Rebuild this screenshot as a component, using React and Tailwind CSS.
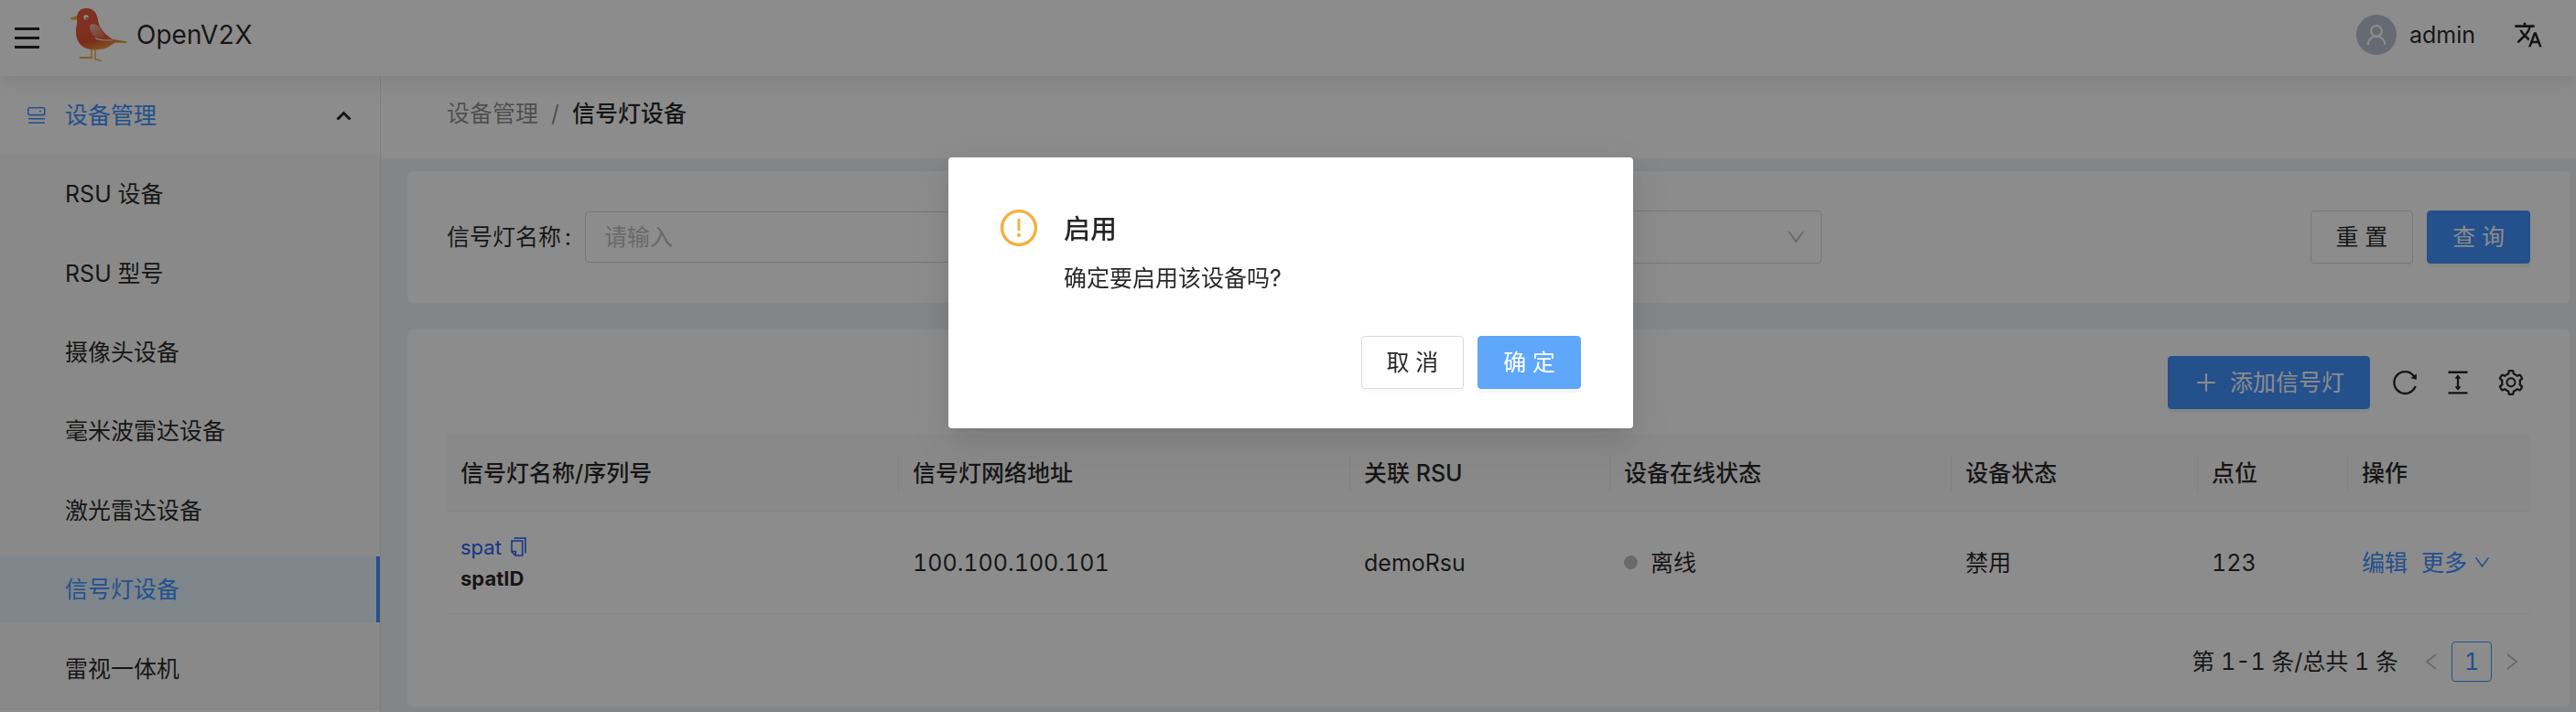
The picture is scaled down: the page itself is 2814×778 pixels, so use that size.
import React from "react";
import {
  AiOutlineColumnHeight,
  AiOutlineDown,
  AiOutlineExclamationCircle,
  AiOutlineLeft,
  AiOutlinePlus,
  AiOutlineReload,
  AiOutlineRight,
  AiOutlineSetting,
  AiOutlineUser,
} from "react-icons/ai";
import { MdTranslate } from "react-icons/md";

const menuItems = [
  "RSU 设备",
  "RSU 型号",
  "摄像头设备",
  "毫米波雷达设备",
  "激光雷达设备",
  "信号灯设备",
  "雷视一体机",
];

function Bird() {
  return (
    <svg viewBox="0 0 64 60" className="h-[60px] w-16" aria-hidden="true">
      <defs>
        <linearGradient id="body" x1="0.3" y1="0" x2="0.6" y2="1">
          <stop offset="0.3" stopColor="#e8583f" />
          <stop offset="0.75" stopColor="#e0532f" />
          <stop offset="1" stopColor="#e89a3c" />
        </linearGradient>
        <linearGradient id="wing" x1="0.2" y1="0" x2="0.8" y2="0.9">
          <stop offset="0" stopColor="#efb3a2" />
          <stop offset="0.6" stopColor="#e8866a" />
          <stop offset="1" stopColor="#e0603c" />
        </linearGradient>
        <linearGradient id="tail" x1="0" y1="0" x2="1" y2="0">
          <stop offset="0" stopColor="#e0662f" />
          <stop offset="1" stopColor="#e8ac3c" />
        </linearGradient>
      </defs>
      <path d="M24 44v11M28 44v12.500" stroke="#e8b048" strokeWidth="1.500" fill="none" />
      <path d="M24.500 55H11.500M28 56.500L34 58.500" stroke="#e8b048" strokeWidth="1.800" fill="none" strokeLinecap="round" />
      <path d="M9 9L0.500 11.500L2 13.500L10 14Z" fill="#efb23c" />
      <path d="M38 35L50 35.300L63 37.500L62 39L50 38.500L36 46Z" fill="url(#tail)" />
      <path
        d="M8 12C8 4 13 1 18.500 1C27 1 30 7 31 14C32 21 35 24 40 30L50 37C46 42 38 46.500 27 46.500C14 46.500 7 38 7 27C7 20 9 17 8 12Z"
        fill="url(#body)"
      />
      <path d="M24 18.500C29 17.500 33 21 35 25C37 29 40 33 42.500 35.300C34 35.500 28 34 25 29.500C22 25 20.500 19.500 24 18.500Z" fill="url(#wing)" />
      <path d="M28 33.500C32 36.500 38 36 47 36" stroke="#fbe4dc" strokeWidth="1.200" fill="none" />
      <circle cx="18" cy="10.800" r="2.600" fill="#fff" />
      <circle cx="18.800" cy="12" r="1.100" fill="#6a4a30" />
    </svg>
  );
}

function DeviceIcon() {
  return (
    <svg viewBox="0 0 20 19" className="h-[19px] w-5" fill="none" stroke="currentColor" strokeWidth="1.600" aria-hidden="true">
      <rect x="0.800" y="0.800" width="18" height="7.800" rx="1.800" />
      <path d="M13 4.700h2M1 12.800h18M1 17.200h18" />
    </svg>
  );
}

function CopyIcon() {
  return (
    <svg viewBox="0 0 17 21" className="h-[21px] w-[17px]" fill="none" stroke="currentColor" strokeWidth="1.600" aria-hidden="true">
      <path d="M3.500 1H16V17.500" />
      <path d="M1 4H12.700V20H5L1 16Z" />
      <path d="M1.500 15.500H5.300V19.500" />
    </svg>
  );
}

const buttonBase =
  "flex h-[58px] cursor-pointer items-center justify-center rounded border px-[27px] whitespace-nowrap";

function Th({ children, last }) {
  return (
    <th className="border-b border-[#f0f0f0] bg-[#fafafa] p-0 text-left font-medium">
      <div className={last ? "flex h-10 items-center pl-[15px]" : "flex h-10 items-center border-r border-[#ebebeb] pl-[15px]"}>
        {children}
      </div>
    </th>
  );
}

function Modal() {
  return (
    <div className="fixed inset-0 flex items-start justify-center bg-black/45 pt-43 pl-1.5">
      <div
        role="dialog"
        aria-modal="true"
        aria-labelledby="modal-title"
        className="w-[748px] rounded bg-white pt-[58px] pr-[57px] pb-[43px] pl-[54px] shadow-[0_5px_11px_-7px_rgba(0,0,0,0.12),0_11px_29px_0_rgba(0,0,0,0.08),0_16px_50px_14px_rgba(0,0,0,0.05)]"
      >
        <div className="flex gap-[26px]">
          <AiOutlineExclamationCircle className="-mt-1 size-[46px] shrink-0 text-[#f5b03e]" />
          <div>
            <h2 id="modal-title" className="text-[29px] leading-[42px] font-medium">启用</h2>
            <p className="mt-3 leading-10">确定要启用该设备吗?</p>
          </div>
        </div>
        <div className="mt-[43px] flex justify-end gap-[15px]">
          <button type="button" className={`${buttonBase} border-[#d9d9d9] bg-white shadow-[0_4px_0_rgba(0,0,0,0.02)]`}>取 消</button>
          <button type="button" className={`${buttonBase} border-[#5fa7fb] bg-[#5fa7fb] text-white shadow-[0_4px_0_rgba(0,0,0,0.04)]`}>确 定</button>
        </div>
      </div>
    </div>
  );
}

export default function App() {
  return (
    <div className="flex min-h-screen flex-col bg-[#f0f2f5] font-['Inter','Noto_Sans_CJK_SC',sans-serif] text-[25px] leading-10 text-black/85 tabular-nums">
      <header className="relative z-10 flex h-[83px] items-center justify-between bg-white pr-9 pl-4 shadow-[0_4px_22px_rgba(0,21,41,0.10)]">
        <div className="flex items-center">
          <button type="button" aria-label="菜单" className="flex w-[27px] cursor-pointer flex-col gap-[7px]">
            <span className="h-[3px] bg-black/85" />
            <span className="h-[3px] bg-black/85" />
            <span className="h-[3px] bg-black/85" />
          </button>
          <a href="#" className="mb-2 ml-[33px] flex items-center gap-[9px] text-[28px]">
            <Bird />
            <span>OpenV2X</span>
          </a>
        </div>
        <div className="mb-2 flex items-center">
          <span className="flex size-11 items-center justify-center rounded-full bg-[#bcc2cf] text-white">
            <AiOutlineUser className="size-7" />
          </span>
          <span className="ml-3.5">admin</span>
          <button type="button" aria-label="语言" className="ml-[42px] cursor-pointer">
            <MdTranslate className="size-8" />
          </button>
        </div>
      </header>

      <div className="flex flex-1">
        <nav className="w-[416px] shrink-0 border-r border-[#e8e8e8] bg-white">
          <button type="button" className="flex h-[86px] w-full cursor-pointer items-center pr-[31px] pl-[30px] text-[#4292ff]">
            <DeviceIcon />
            <span className="ml-[21px]">设备管理</span>
            <svg viewBox="0 0 17 11" className="ml-auto h-[11px] w-[17px] text-black/85" fill="none" stroke="currentColor" strokeWidth="3" aria-hidden="true">
              <path d="M1.500 9.500L8.500 2.500L15.500 9.500" />
            </svg>
          </button>
          <ul className="flex h-[606px] flex-col justify-around border-b border-[#f0f0f0] bg-[#fafafa]">
            {menuItems.map((label) => {
              const active = label === "信号灯设备";
              return (
                <li key={label}>
                  <a
                    href="#"
                    aria-current={active ? "page" : undefined}
                    className={
                      active
                        ? "flex h-[72px] items-center border-r-4 border-[#4292ff] bg-[#e6f4ff] pl-[71px] text-[#4292ff]"
                        : "flex h-[72px] items-center pl-[71px]"
                    }
                  >
                    {label}
                  </a>
                </li>
              );
            })}
          </ul>
        </nav>

        <main className="min-w-0 flex-1">
          <div className="flex h-[90px] items-center gap-3.5 bg-white pb-2 pl-[72px]">
            <a href="#" className="text-black/45">设备管理</a>
            <span className="text-black/45">/</span>
            <span className="font-medium">信号灯设备</span>
          </div>

          <div className="flex flex-col gap-[29px] pt-3.5 pr-[7px] pl-[29px]">
            <section className="flex h-36 items-center rounded-md bg-white px-[43px]">
              <label htmlFor="name" className="flex w-[151px] shrink-0 gap-1">
                信号灯名称<span>:</span>
              </label>
              <input
                id="name"
                placeholder="请输入"
                className="h-14 w-[570px] rounded border border-[#d9d9d9] bg-transparent px-5 placeholder:text-[#bfbfbf]"
              />
              <label htmlFor="state" className="ml-11 flex w-[151px] shrink-0 gap-1">
                设备状态<span>:</span>
              </label>
              <div className="relative w-[586px]">
                <select id="state" className="h-[58px] w-full appearance-none rounded border border-[#d9d9d9] bg-transparent px-5">
                  <option></option>
                </select>
                <AiOutlineDown className="pointer-events-none absolute top-[17px] right-4 size-6 text-[#bfbfbf]" />
              </div>
              <div className="ml-auto flex gap-[15px]">
                <button type="button" className={`${buttonBase} border-[#d9d9d9] bg-white shadow-[0_4px_0_rgba(0,0,0,0.02)]`}>重 置</button>
                <button type="button" className={`${buttonBase} border-[#4292ff] bg-[#4292ff] text-white shadow-[0_4px_0_rgba(0,0,0,0.04)]`}>查 询</button>
              </div>
            </section>

            <section className="h-[412px] rounded-md bg-white px-[43px] pt-[29px]">
              <div className="mb-7 flex items-center justify-end">
                <button type="button" className={`${buttonBase} gap-3 border-[#4292ff] bg-[#4292ff] text-white shadow-[0_4px_0_rgba(0,0,0,0.04)]`}>
                  <AiOutlinePlus className="size-7" />
                  <span>添加信号灯</span>
                </button>
                <div className="ml-[22px] flex gap-[26px] pr-[5px]">
                  <button type="button" aria-label="刷新" className="cursor-pointer"><AiOutlineReload className="size-8" /></button>
                  <button type="button" aria-label="密度" className="cursor-pointer"><AiOutlineColumnHeight className="size-8" /></button>
                  <button type="button" aria-label="列设置" className="cursor-pointer"><AiOutlineSetting className="size-8" /></button>
                </div>
              </div>

              <table className="w-full table-fixed border-separate border-spacing-0">
                <colgroup>
                  <col className="w-[494px]" />
                  <col className="w-[493px]" />
                  <col className="w-[284px]" />
                  <col className="w-[373px]" />
                  <col className="w-[269px]" />
                  <col className="w-[164px]" />
                  <col className="w-[199px]" />
                </colgroup>
                <thead>
                  <tr className="h-[84px]">
                    <Th>信号灯名称/序列号</Th>
                    <Th>信号灯网络地址</Th>
                    <Th>关联 RSU</Th>
                    <Th>设备在线状态</Th>
                    <Th>设备状态</Th>
                    <Th>点位</Th>
                    <Th last>操作</Th>
                  </tr>
                </thead>
                <tbody>
                  <tr className="h-28 [&>td]:border-b [&>td]:border-[#f0f0f0] [&>td]:pl-[15px]">
                    <td className="text-[22px] leading-[34px]">
                      <a href="#" className="flex items-center gap-2.5 text-[#2b62f0]">
                        spat <CopyIcon />
                      </a>
                      <span className="font-bold">spatID</span>
                    </td>
                    <td>100.100.100.101</td>
                    <td>demoRsu</td>
                    <td>
                      <span className="flex items-center gap-3.5">
                        <span className="size-[15px] rounded-full bg-[#bfbfbf]" />
                        离线
                      </span>
                    </td>
                    <td>禁用</td>
                    <td>123</td>
                    <td>
                      <span className="flex gap-[15px] text-[#4292ff]">
                        <a href="#">编辑</a>
                        <a href="#" className="flex items-center gap-1.5">
                          更多 <AiOutlineDown className="size-[21px]" />
                        </a>
                      </span>
                    </td>
                  </tr>
                </tbody>
              </table>

              <nav aria-label="分页" className="mt-[30px] flex items-center justify-end pr-2">
                <span>第 1-1 条/总共 1 条</span>
                <button type="button" aria-label="上一页" className="ml-6 text-[#bfbfbf]"><AiOutlineLeft className="size-6" /></button>
                <button type="button" aria-current="page" className="mx-2.5 flex size-11 cursor-pointer items-center justify-center rounded border border-[#4292ff] text-[#4292ff]">1</button>
                <button type="button" aria-label="下一页" className="text-[#bfbfbf]"><AiOutlineRight className="size-6" /></button>
              </nav>
            </section>
          </div>
        </main>
      </div>

      <div className="relative z-20">
        <Modal />
      </div>
    </div>
  );
}
